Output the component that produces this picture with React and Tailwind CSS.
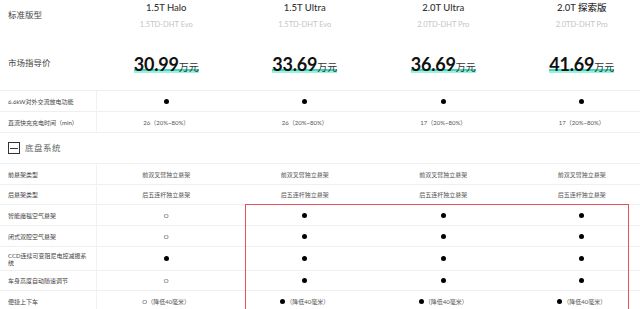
import React from "react";

const FONT = { fontFamily: '"Lato", "Noto Sans CJK SC", sans-serif' };

const models = [
  { name: "1.5T Halo", sub: "1.5TD-DHT Evo", price: "30.99" },
  { name: "1.5T Ultra", sub: "1.5TD-DHT Evo", price: "33.69" },
  { name: "2.0T Ultra", sub: "2.0TD-DHT Pro", price: "36.69" },
  { name: "2.0T 探索版", sub: "2.0TD-DHT Pro", price: "41.69" },
];

function Dot() {
  return <span className="inline-block w-[5px] h-[5px] rounded-full bg-black" />;
}

function Cell({ v }) {
  if (v === "●") return <Dot />;
  if (v === "●降") {
    return (
      <span className="flex items-center gap-[1px]">
        <Dot />
        <span>（降低40毫米）</span>
      </span>
    );
  }
  return <span>{v}</span>;
}

function Row({ label, cells, h }) {
  return (
    <div className={`flex border-t border-[#efefef] ${h}`}>
      <div className="w-[97px] shrink-0 border-r border-[#f1f1f1] flex items-center pl-[8px] text-[6px] leading-[7px] text-[#444]">
        <span className="max-w-[80px]">{label}</span>
      </div>
      {cells.map((c, i) => (
        <div
          key={i}
          className="w-[138.5px] shrink-0 flex items-center justify-center text-[6px] text-[#555]"
        >
          <Cell v={c} />
        </div>
      ))}
    </div>
  );
}

export default function App() {
  return (
    <div className="w-[640px] h-[309px] overflow-hidden bg-white relative" style={FONT}>
      <div className="w-[651px]">
        {/* header */}
        <div className="flex h-[38px]">
          <div className="w-[97px] shrink-0 pl-[8px] pt-[9px] text-[8.5px] text-[#444]">标准版型</div>
          {models.map((m) => (
            <div key={m.price} className="w-[138.5px] shrink-0 flex flex-col items-center pt-[1px]">
              <div className="text-[9.5px] font-medium text-[#333] leading-[13px]">{m.name}</div>
              <div className="mt-[6px] text-[7.5px] text-[#c4c4c4] leading-[10px]">{m.sub}</div>
            </div>
          ))}
        </div>

        {/* price */}
        <div className="flex h-[52px] items-center">
          <div className="w-[97px] shrink-0 pl-[8px] text-[8.5px] text-[#444] pb-[1px]">市场指导价</div>
          {models.map((m) => (
            <div key={m.price} className="w-[138.5px] shrink-0 flex justify-center">
              <div className="relative inline-flex items-baseline">
                <span className="absolute left-0 right-0 bottom-[2px] h-[3px] bg-[#9eeede]" />
                <span className="absolute left-0 right-0 bottom-[4px] h-[2px] bg-[#3fd7bd]" />
                <span className="relative text-[18px] font-bold text-[#111] leading-[22px] tracking-[-0.2px]">
                  {m.price}
                </span>
                <span className="relative text-[10px] text-[#333]">万元</span>
              </div>
            </div>
          ))}
        </div>

        <Row h="h-[21px]" label="6.6kW对外交流放电功能" cells={["●", "●", "●", "●"]} />
        <Row
          h="h-[21px]"
          label="直流快充充电时间（min）"
          cells={["26（20%~80%）", "26（20%~80%）", "17（20%~80%）", "17（20%~80%）"]}
        />

        {/* section */}
        <div className="flex items-center h-[31px] border-t border-[#efefef] pl-[8px]">
          <span className="w-[12px] h-[12px] border border-[#333] flex items-center justify-center">
            <span className="w-[8px] h-[1px] bg-[#333]" />
          </span>
          <span className="ml-[5px] text-[8.5px] text-[#666] tracking-[0.5px]">底盘系统</span>
        </div>

        <Row h="h-[21px]" label="前悬架类型" cells={Array(4).fill("前双叉臂独立悬架")} />
        <Row h="h-[20px]" label="后悬架类型" cells={Array(4).fill("后五连杆独立悬架")} />
        <Row h="h-[21px]" label="智能魔毯空气悬架" cells={["O", "●", "●", "●"]} />
        <Row h="h-[21px]" label="闭式双腔空气悬架" cells={["O", "●", "●", "●"]} />
        <Row h="h-[24px]" label="CCD连续可变阻尼电控减振系统" cells={["●", "●", "●", "●"]} />
        <Row h="h-[20px]" label="车身高度自动随速调节" cells={["O", "●", "●", "●"]} />
        <Row h="h-[21px]" label="便捷上下车" cells={["O（降低40毫米）", "●降", "●降", "●降"]} />
      </div>

      {/* red annotation box */}
      <div className="absolute left-[245px] top-[204px] w-[384px] h-[120px] border-[1.5px] border-[#e4505c] pointer-events-none" />
    </div>
  );
}
